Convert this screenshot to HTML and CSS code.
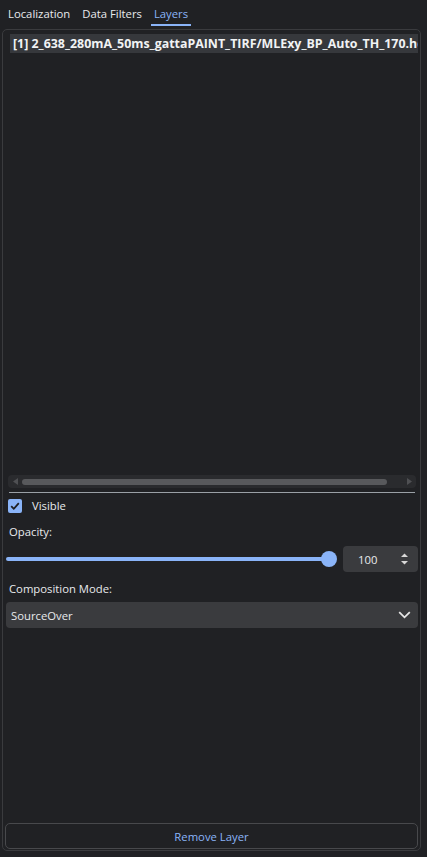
FILE: index.html
```html
<!DOCTYPE html>
<html>
<head>
<meta charset="utf-8">
<link rel="stylesheet" href="styles.css">
</head>
<body>
<div class="tabs">
  <div class="tab">Localization</div>
  <div class="tab">Data Filters</div>
  <div class="tab active">Layers</div>
</div>
<div class="panel">
  <div class="list">
    <div class="row">[1] 2_638_280mA_50ms_gattaPAINT_TIRF/MLExy_BP_Auto_TH_170.hdf5</div>
  </div>
  <div class="hscroll">
    <svg class="arrow" width="5" height="7" viewBox="0 0 5 7"><path d="M5 0 L0 3.5 L5 7 Z" fill="#4f5053"/></svg>
    <div class="htrack"><div class="hhandle"></div></div>
    <svg class="arrow" width="5" height="7" viewBox="0 0 5 7"><path d="M0 0 L5 3.5 L0 7 Z" fill="#4f5053"/></svg>
  </div>
  <div class="sep"></div>
  <label class="check">
    <span class="box"><svg width="14" height="14" viewBox="0 0 14 14"><path d="M3.2 7.2 L5.8 9.8 L10.8 4.2" fill="none" stroke="#1e1f22" stroke-width="1.8"/></svg></span>
    <span>Visible</span>
  </label>
  <div class="label">Opacity:</div>
  <div class="slider-row">
    <div class="slider"><div class="fill"></div><div class="knob"></div></div>
    <div class="spin">
      <span class="spin-val">100</span>
      <svg class="spin-arrows" width="9" height="14" viewBox="0 0 9 14"><path d="M1 5 L4.5 1.5 L8 5 Z" fill="#d8d8d8"/><path d="M1 9 L4.5 12.5 L8 9 Z" fill="#d8d8d8"/></svg>
    </div>
  </div>
  <div class="label label2">Composition Mode:</div>
  <div class="combo">
    <span>SourceOver</span>
    <svg width="13" height="8" viewBox="0 0 13 8"><path d="M1.2 1.2 L6.5 6.3 L11.8 1.2" fill="none" stroke="#e6e6e6" stroke-width="1.8"/></svg>
  </div>
  <div class="spacer"></div>
  <button class="btn">Remove Layer</button>
</div>
</body>
</html>
```
FILE: styles.css
```css
* { box-sizing: border-box; }
html, body { margin: 0; padding: 0; }
body {
  width: 427px;
  height: 857px;
  background: #202124;
  color: #e8eaed;
  font-family: "Open Sans", "Noto Sans", sans-serif;
  font-size: 11.3px;
  display: flex;
  flex-direction: column;
  overflow: hidden;
}
.tabs {
  display: flex;
  height: 27px;
  padding-left: 5px;
  flex: none;
}
.tab {
  padding: 0 3px;
  margin-right: 6px;
  line-height: 27px;
  height: 27px;
  color: #e8eaed;
  position: relative;
}
.tab.active { color: #8ab4f8; }
.tab.active::after {
  content: "";
  position: absolute;
  left: 0; right: 0;
  bottom: 1px;
  height: 2px;
  background: #8ab4f8;
}
.panel {
  flex: 1;
  margin: 2px 6px 6px 2px;
  border: 1px solid #3a3b3e;
  border-radius: 5px;
  display: flex;
  flex-direction: column;
  padding: 0 2px 1px 1px;
}
.list {
  height: 445px;
  padding: 4px 0 0 6px;
  overflow: hidden;
}
.row {
  background: #36383c;
  height: 19px;
  line-height: 19px;
  padding-left: 3px;
  font-weight: bold;
  font-size: 12.4px;
  color: #f1f3f4;
  white-space: nowrap;
  overflow: hidden;
}
.hscroll {
  margin: 0 2px 0 4px;
  height: 13px;
  background: #2a2b2e;
  border-radius: 4px;
  display: flex;
  align-items: center;
  padding: 0 4px 0 5px;
  gap: 4px;
}
.htrack { flex: 1; }
.hhandle {
  height: 6px;
  width: 365px;
  background: #58595c;
  border-radius: 3px;
}
.sep {
  margin: 4px 3px 0 5px;
  height: 1px;
  background: #9aa0a6;
}
.check {
  display: flex;
  align-items: center;
  gap: 10px;
  margin: 5px 0 0 4px;
  height: 15px;
}
.box {
  width: 14px; height: 14px;
  background: #8ab4f8;
  border-radius: 2px;
  display: block;
}
.box svg { display: block; }
.label {
  margin: 11px 0 0 5px;
  height: 15px;
  line-height: 15px;
}
.slider-row {
  display: flex;
  align-items: center;
  margin-top: 7px;
  padding-left: 2px;
}
.slider {
  flex: 1;
  position: relative;
  height: 26px;
  margin-right: 6px;
}
.fill {
  position: absolute;
  left: 0; right: 8px;
  top: 11px;
  height: 4px;
  background: #8ab4f8;
  border-radius: 2px;
}
.knob {
  position: absolute;
  right: 0;
  top: 5px;
  width: 16px; height: 16px;
  border-radius: 50%;
  background: #8ab4f8;
}
.spin {
  width: 75px;
  height: 26px;
  background: #3a3b3e;
  border-radius: 4px;
  display: flex;
  align-items: center;
  padding: 0 9px 0 15px;
  justify-content: space-between;
}
.spin-arrows { display: block; }
.label2 { margin-top: 9px; }
.combo {
  margin: 6px 0 0 2px;
  height: 26px;
  background: #3a3b3e;
  border-radius: 4px;
  display: flex;
  align-items: center;
  justify-content: space-between;
  padding: 0 7px 0 5px;
}
.combo svg { display: block; }
.spacer { flex: 1; }
.btn {
  height: 26px;
  margin: 0 0 0 1px;
  background: transparent;
  border: 1px solid #48494c;
  border-radius: 5px;
  color: #8ab4f8;
  font-family: inherit;
  font-size: 11.3px;
  padding: 0;
}
```
